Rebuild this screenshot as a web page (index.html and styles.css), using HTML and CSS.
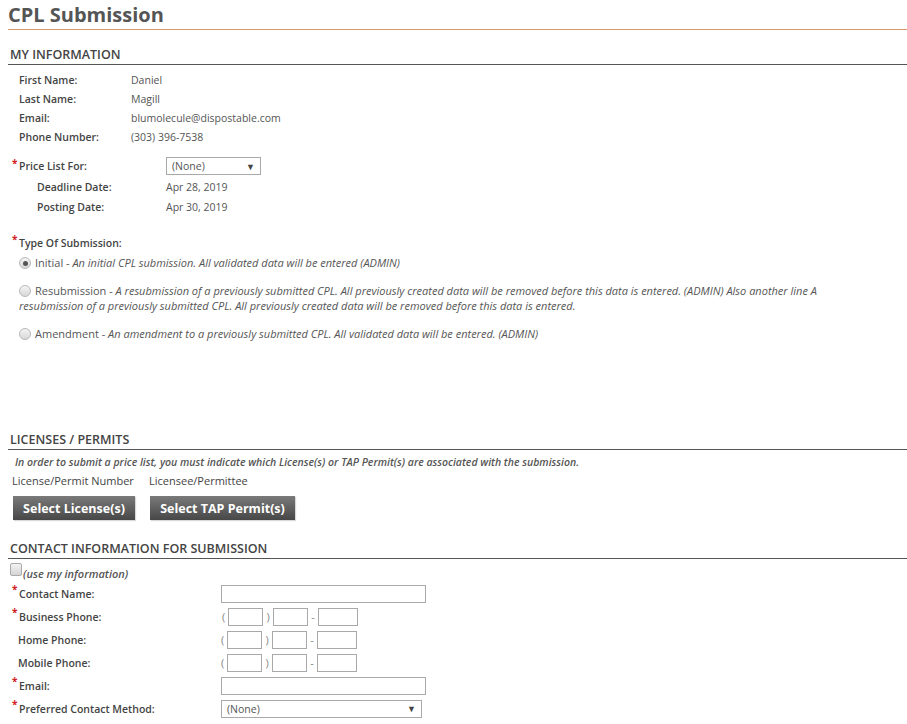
FILE: index.html
```html
<!DOCTYPE html>
<html>
<head>
<meta charset="utf-8">
<link rel="stylesheet" href="styles.css">
</head>
<body>
<div class="page">
  <h1 class="title">CPL Submission</h1>

  <h2 class="section first">MY INFORMATION</h2>
  <div class="info">
    <div class="irow"><span class="ilabel">First Name:</span><span class="ival">Daniel</span></div>
    <div class="irow"><span class="ilabel">Last Name:</span><span class="ival">Magill</span></div>
    <div class="irow"><span class="ilabel">Email:</span><span class="ival">blumolecule@dispostable.com</span></div>
    <div class="irow"><span class="ilabel">Phone Number:</span><span class="ival">(303) 396-7538</span></div>
  </div>

  <div class="price-row">
    <span class="req">*</span><span class="plabel">Price List For:</span>
    <div class="select small"><span>(None)</span><span class="arrow">▼</span></div>
  </div>
  <div class="drow"><span class="dlabel">Deadline Date:</span><span class="dval">Apr 28, 2019</span></div>
  <div class="drow"><span class="dlabel">Posting Date:</span><span class="dval">Apr 30, 2019</span></div>

  <div class="type-row"><span class="req">*</span><span class="plabel">Type Of Submission:</span></div>
  <p class="opt opt-initial"><span class="radio checked"></span>Initial - <em>An initial CPL submission. All validated data will be entered (ADMIN)</em></p>
  <div class="opt opt-resub">
    <div class="line"><span class="radio"></span>Resubmission - <em>A resubmission of a previously submitted CPL. All previously created data will be removed before this data is entered. (ADMIN) Also another line A</em></div>
    <div class="line"><em>resubmission of a previously submitted CPL. All previously created data will be removed before this data is entered.</em></div>
  </div>
  <p class="opt opt-amend"><span class="radio"></span>Amendment - <em>An amendment to a previously submitted CPL. All validated data will be entered. (ADMIN)</em></p>

  <h2 class="section licenses">LICENSES / PERMITS</h2>
  <p class="notice">In order to submit a price list, you must indicate which License(s) or TAP Permit(s) are associated with the submission.</p>
  <div class="cols"><span class="col1">License/Permit Number</span><span>Licensee/Permittee</span></div>
  <div class="buttons">
    <button class="btn btn-lic">Select License(s)</button>
    <button class="btn btn-tap">Select TAP Permit(s)</button>
  </div>

  <h2 class="section contact">CONTACT INFORMATION FOR SUBMISSION</h2>
  <div class="use-mine"><span class="checkbox"></span><em>(use my information)</em></div>
  <div class="crow"><span class="req">*</span><span class="clabel">Contact Name:</span><span class="input wide"></span></div>
  <div class="crow"><span class="req">*</span><span class="clabel">Business Phone:</span>
    <span class="phone"><span class="paren">(</span><span class="input p1"></span><span class="paren2">)</span><span class="input p2"></span><span class="dash">-</span><span class="input p3"></span></span></div>
  <div class="crow"><span class="noreq"></span><span class="clabel">Home Phone:</span>
    <span class="phone"><span class="paren">(</span><span class="input p1"></span><span class="paren2">)</span><span class="input p2"></span><span class="dash">-</span><span class="input p3"></span></span></div>
  <div class="crow"><span class="noreq"></span><span class="clabel">Mobile Phone:</span>
    <span class="phone"><span class="paren">(</span><span class="input p1"></span><span class="paren2">)</span><span class="input p2"></span><span class="dash">-</span><span class="input p3"></span></span></div>
  <div class="crow"><span class="req">*</span><span class="clabel">Email:</span><span class="input wide"></span></div>
  <div class="crow"><span class="req">*</span><span class="clabel">Preferred Contact Method:</span>
    <div class="select big"><span>(None)</span><span class="arrow">▼</span></div></div>
</div>
</body>
</html>
```

FILE: styles.css
```css
html, body {
  margin: 0;
  padding: 0;
  background: #fff;
}
body {
  font-family: "Open Sans", "Liberation Sans", Arial, sans-serif;
  font-size: 11px;
  color: #555;
}
.page {
  padding: 1px 0 0 8px;
  width: 899px;
}
.title {
  margin: 0;
  font-size: 20px;
  line-height: 28px;
  font-weight: 700;
  color: #555;
  border-bottom: 1px solid #d9976a;
}
.section {
  margin: 0;
  padding-left: 2px;
  font-size: 12.5px;
  font-weight: 600;
  line-height: 18px;
  color: #444;
  border-bottom: 1px solid #555;
}
.section.first { margin-top: 16px; }
.info { margin-top: 5px; padding-left: 11px; }
.irow { display: flex; height: 19px; align-items: center; }
.ilabel { width: 112px; font-weight: 600; font-size: 10.5px; color: #444; }
.ival { color: #555; font-size: 10.5px; }

.req {
  color: #d21f1f;
  font-size: 10px;
  font-weight: 700;
  width: 7px;
  align-self: flex-start;
  line-height: 12px;
  margin-top: 2px;
}
.noreq { width: 6px; }

.price-row {
  display: flex;
  align-items: center;
  height: 22px;
  margin-top: 9px;
  padding-left: 4px;
}
.plabel { font-weight: 600; font-size: 10.5px; color: #444; width: 147px; }
.type-row { display: flex; align-items: center; height: 20px; margin-top: 16px; padding-left: 4px; }
.type-row .req { margin-top: 0; }

.select {
  box-sizing: border-box;
  border: 1px solid #a9a9a9;
  height: 18px;
  display: flex;
  align-items: center;
  justify-content: space-between;
  padding: 0 5px 0 5px;
  color: #555;
  background: #fff;
  font-size: 10.5px;
}
.select .arrow { font-size: 9px; color: #444; }
.select.small { width: 95px; }
.select.big { width: 201px; }

.drow { display: flex; align-items: center; height: 20px; padding-left: 29px; }
.drow:first-of-type { margin-top: 1px; }
.dlabel { width: 129px; font-weight: 600; font-size: 10.5px; color: #444; }
.dval { font-size: 10.5px; }

.opt {
  margin: 0;
  padding-left: 11px;
  padding-right: 60px;
  line-height: 15px;
  color: #555;
}
.opt em { font-style: italic; }
.opt-initial { margin-top: 1px; line-height: 17px; }
.opt-resub { margin-top: 12px; }
.opt-resub .line { white-space: nowrap; }
.opt-amend { margin-top: 13px; }

.radio {
  display: inline-block;
  box-sizing: border-box;
  width: 12px;
  height: 12px;
  border-radius: 50%;
  border: 1px solid #b8b8b8;
  background: linear-gradient(#f4f4f4, #d8d8d8);
  vertical-align: -2px;
  margin-right: 4px;
  position: relative;
}
.radio.checked::after {
  content: "";
  position: absolute;
  left: 2.5px;
  top: 2.5px;
  width: 5px;
  height: 5px;
  border-radius: 50%;
  background: #555;
}

.section.licenses { margin-top: 90px; }
.notice {
  margin: 3px 0 0 0;
  padding-left: 7px;
  line-height: 18px;
  font-style: italic;
  font-weight: 600;
  font-size: 10.5px;
  color: #555;
}
.cols {
  display: flex;
  height: 18px;
  align-items: center;
  padding-left: 4px;
  color: #444;
}
.col1 { width: 137px; }
.buttons { display: flex; gap: 15px; margin-top: 7px; padding-left: 5px; }
.btn {
  height: 24px;
  border: none;
  padding: 0;
  background: linear-gradient(#7a7a7a, #474747);
  color: #fff;
  font-family: "Open Sans", "Liberation Sans", Arial, sans-serif;
  font-size: 12.5px;
  font-weight: 700;
  box-shadow: 1px 1px 1px rgba(0,0,0,0.15);
}
.btn-lic { width: 122px; }
.btn-tap { width: 145px; }

.section.contact { margin-top: 20px; }
.use-mine { display: flex; align-items: center; height: 18px; margin-top: 5px; padding-left: 2px; }
.checkbox {
  box-sizing: border-box;
  width: 12px;
  height: 13px;
  border: 1px solid #aaa;
  border-radius: 2px;
  background: linear-gradient(#f2f2f2, #d5d5d5);
  margin-right: 1px;
  margin-top: -8px;
}
.use-mine em { font-style: italic; font-weight: 600; color: #555; }

.crow { display: flex; align-items: center; height: 23px; padding-left: 4px; }
.crow .req { margin-top: 1px; }
.clabel { width: 202px; font-weight: 600; font-size: 10.5px; color: #444; }
.input {
  box-sizing: border-box;
  display: inline-block;
  border: 1px solid #a9a9a9;
  height: 18px;
  background: #fff;
}
.input.wide { width: 205px; }
.phone { display: flex; align-items: center; color: #888; }
.paren { width: 7px; padding-left: 1px; box-sizing: border-box; }
.paren2 { width: 10px; text-align: center; }
.dash { width: 10px; text-align: center; }
.input.p1 { width: 35px; }
.input.p2 { width: 35px; }
.input.p3 { width: 40px; }
```
